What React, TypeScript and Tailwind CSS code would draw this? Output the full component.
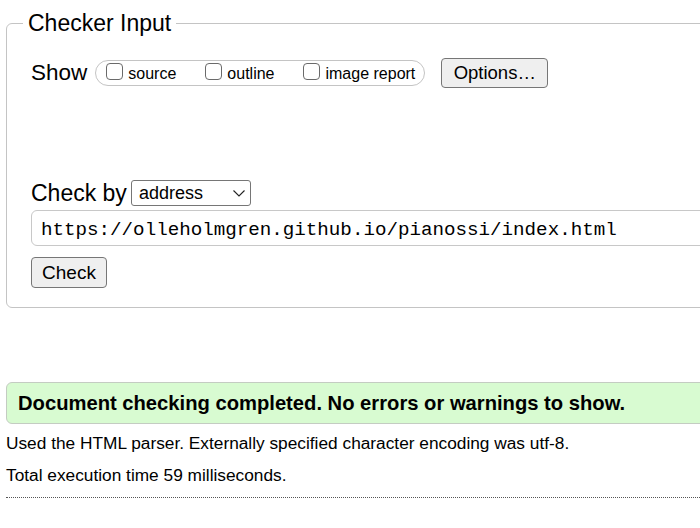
import React from 'react';

const showOptions = [
  { id: 'showsource', label: 'source' },
  { id: 'showoutline', label: 'outline' },
  { id: 'showimagereport', label: 'image report' },
];

const App: React.FC = () => {
  return (
    <div className="w-[700px] h-[528px] overflow-hidden bg-white text-black font-['Liberation_Sans',Arial,sans-serif]">
      <form onSubmit={(e) => e.preventDefault()}>
        <fieldset className="min-w-0 w-[780px] mt-[12px] ml-[6px] border border-[#c4c4c4] rounded-[6px] pl-[16px] pb-[19px]">
          <legend className="px-[5px] text-[23px] leading-[23px]">Checker Input</legend>
          <div className="pl-[8px]">
            {/* show options row */}
            <div className="mt-[23px] flex items-center h-[30px]">
              <span className="text-[22.5px] leading-[30px]">Show</span>
              <div className="ml-[8px] w-[330px] h-[26px] flex items-center gap-[29px] pl-[10px] border border-[#c4c4c4] rounded-full">
                {showOptions.map(opt => (
                  <label key={opt.id} htmlFor={opt.id} className="flex items-center gap-[5px] text-[16px] leading-[20px]">
                    <input
                      id={opt.id}
                      type="checkbox"
                      className="appearance-none w-[17px] h-[17px] -mt-[3px] border border-[#6a6a6a] rounded-[4px] bg-white"
                    />
                    <span className="mt-[2px]">{opt.label}</span>
                  </label>
                ))}
              </div>
              <button
                type="button"
                className="ml-[16px] w-[107px] h-[30px] bg-[#efefef] border border-[#767676] rounded-[4px] text-[18.5px] leading-[20px]"
              >
                Options…
              </button>
            </div>

            {/* check by row */}
            <div className="mt-[92px] flex items-center h-[26px]">
              <span className="text-[23px] leading-[26px]">Check by</span>
              <div className="relative ml-[4px] w-[120px] h-[26px]">
                <select className="appearance-none w-full h-full pl-[7px] border border-[#767676] rounded-[3px] bg-white text-[18px] leading-[22px]">
                  <option>address</option>
                  <option>file upload</option>
                  <option>text input</option>
                </select>
                <svg className="absolute right-[6px] top-[10px] pointer-events-none" width="12" height="7" viewBox="0 0 12 7" fill="none">
                  <polyline points="0.5,0.5 6,6 11.5,0.5" stroke="#222" strokeWidth="1.1" />
                </svg>
              </div>
            </div>

            <input
              type="text"
              defaultValue="https://olleholmgren.github.io/pianossi/index.html"
              className="mt-[4px] block w-[720px] h-[36px] pl-[9px] pt-[3px] border border-[#c8c8c8] rounded-[6px] text-[19.2px] font-['Liberation_Mono','DejaVu_Sans_Mono',monospace] outline-none"
            />

            <button
              type="submit"
              className="mt-[11px] block w-[76px] h-[31px] bg-[#efefef] border border-[#767676] rounded-[4px] text-[19px] leading-[22px]"
            >
              Check
            </button>
          </div>
        </fieldset>
      </form>

      <div className="mt-[74px] ml-[6px] w-[760px] h-[42px] flex items-center pl-[11px] bg-[#d8fbd1] border border-[#c4ccc2] rounded-[6px]">
        <p className="text-[20.2px] font-bold">Document checking completed. No errors or warnings to show.</p>
      </div>

      <div className="ml-[6px] mt-[3px] text-[17.3px] leading-[32px]">
        <p>Used the HTML parser. Externally specified character encoding was utf-8.</p>
        <p>Total execution time 59 milliseconds.</p>
      </div>
      <div className="ml-[6px] mt-[6px] border-t border-dotted border-[#555]" />
    </div>
  );
};

export default App;
